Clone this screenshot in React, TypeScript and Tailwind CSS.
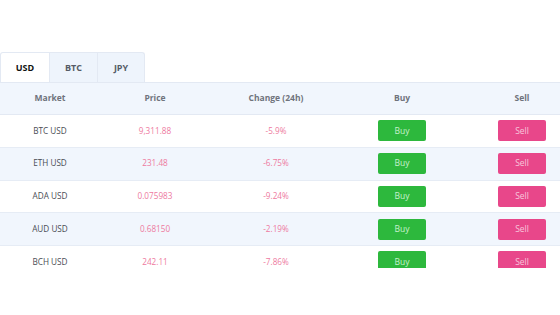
import React from "react";

const rows = [
  { market: "BTC USD", price: "9,311.88", change: "-5.9%" },
  { market: "ETH USD", price: "231.48", change: "-6.75%" },
  { market: "ADA USD", price: "0.075983", change: "-9.24%" },
  { market: "AUD USD", price: "0.68150", change: "-2.19%" },
  { market: "BCH USD", price: "242.11", change: "-7.86%" },
];

const tabs = ["USD", "BTC", "JPY"];
// table is wider than the window, so the Sell column runs past the right edge
const cols = "grid grid-cols-[100px_110px_132px_120px_120px] w-[582px]";

export default function App() {
  return (
    <div className="w-[560px] h-[315px] bg-white pt-[52px] overflow-hidden" style={{ fontFamily: "'Open Sans', 'Liberation Sans', sans-serif" }}>
      {/* Tabs */}
      <div className="flex">
        {tabs.map((t, i) => (
          <div key={t}
            className={`h-[30px] flex items-center justify-center text-[9px] font-bold border-t border-r border-[#e3e9f3] ${
              i === 0 ? "w-[50px] bg-white text-[#111] border-l rounded-tl-[3px]" : "bg-[#eef4fc] text-[#555b66]"
            } ${i === 1 ? "w-[48px]" : ""} ${i === 2 ? "w-[47px] rounded-tr-[3px]" : ""}`}>
            {t}
          </div>
        ))}
      </div>

      {/* Table */}
      <div className="h-[186px] overflow-hidden border-t border-[#e3e9f3]">
        <div className={`${cols} h-[32px] bg-[#f1f6fd] border-b border-[#e3e9f3] text-[8.5px] font-bold text-[#6f737c]`}>
          {["Market", "Price", "Change (24h)", "Buy", "Sell"].map(h => (
            <div key={h} className="flex items-center justify-center">{h}</div>
          ))}
        </div>
        {rows.map((r, i) => (
          <div key={r.market}
            className={`${cols} h-[32.75px] border-b border-[#e6ecf5] text-[8.2px] ${i % 2 ? "bg-[#f1f6fd]" : "bg-white"}`}>
            <div className="flex items-center justify-center text-[#4a4d55]">{r.market}</div>
            <div className="flex items-center justify-center text-[#ee7aa0]">{r.price}</div>
            <div className="flex items-center justify-center text-[#ee7aa0]">{r.change}</div>
            <div className="flex items-center justify-center">
              <button className="w-[48px] h-[21px] rounded-[2px] bg-[#2db83d] text-[#c9f0cd] text-[8.5px]">Buy</button>
            </div>
            <div className="flex items-center justify-center">
              <button className="w-[48px] h-[21px] rounded-[2px] bg-[#e8478a] text-[#f7c6da] text-[8.5px]">Sell</button>
            </div>
          </div>
        ))}
      </div>
    </div>
  );
}
